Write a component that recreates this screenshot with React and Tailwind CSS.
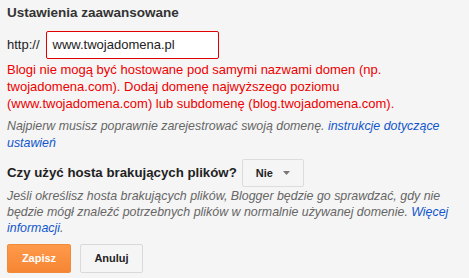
export default function App() {
  return (
    <div className="w-[469px] h-[278px] bg-[#f5f5f5] pl-[7px] overflow-hidden font-['Liberation_Sans',Arial,sans-serif]">
      <div className="pt-[4px] text-[13.5px] leading-[18px] font-bold text-[#333]">Ustawienia zaawansowane</div>
      <div className="flex items-center mt-[9px]">
        <span className="text-[13px] text-[#222] mr-[6px]">http://</span>
        <div className="w-[173px] h-[28px] border border-[#e00000] rounded-[2px] bg-white flex items-center px-[6px] text-[13px] text-[#222]">
          www.twojadomena.pl
        </div>
      </div>
      <div className="mt-[2px] w-[455px] text-[13px] leading-[17px] text-[#ee0000]">
        Blogi nie mogą być hostowane pod samymi nazwami domen (np. twojadomena.com). Dodaj domenę najwyższego poziomu (www.twojadomena.com) lub subdomenę (blog.twojadomena.com).
      </div>
      <div className="mt-[6px] w-[455px] text-[12.4px] leading-[17px] italic text-[#666]">
        Najpierw musisz poprawnie zarejestrować swoją domenę. <span className="text-[#1155cc]">instrukcje dotyczące ustawień</span>
      </div>
      <div className="flex items-center mt-[7px]">
        <span className="text-[13.25px] font-bold text-[#222] mr-[5px]">Czy użyć hosta brakujących plików?</span>
        <div className="w-[62px] h-[28px] border border-[#dcdcdc] rounded-[2px] bg-[#f5f5f5] flex items-center pl-[13px] text-[11px] font-bold text-[#222]">
          <span>Nie</span>
          <svg className="ml-[10px]" width="7" height="4" viewBox="0 0 7 4"><path d="M0 0h7L3.5 4z" fill="#777" /></svg>
        </div>
      </div>
      <div className="mt-[1px] text-[12.4px] leading-[16px] italic text-[#666] whitespace-nowrap">
        <div>Jeśli określisz hosta brakujących plików, Blogger będzie go sprawdzać, gdy nie</div>
        <div>będzie mógł znaleźć potrzebnych plików w normalnie używanej domenie. <span className="text-[#1155cc]">Więcej</span></div>
        <div><span className="text-[#1155cc]">informacji</span>.</div>
      </div>
      <div className="flex mt-[8px] gap-[9px]">
        <div className="w-[64px] h-[29px] rounded-[2px] border border-[#f08a3c] bg-gradient-to-b from-[#ff9a4a] to-[#f58633] flex items-center justify-center text-[11px] font-bold text-white">Zapisz</div>
        <div className="w-[63px] h-[29px] rounded-[2px] border border-[#d9d9d9] bg-[#f5f5f5] flex items-center justify-center text-[11px] font-bold text-[#222]">Anuluj</div>
      </div>
    </div>
  );
}
